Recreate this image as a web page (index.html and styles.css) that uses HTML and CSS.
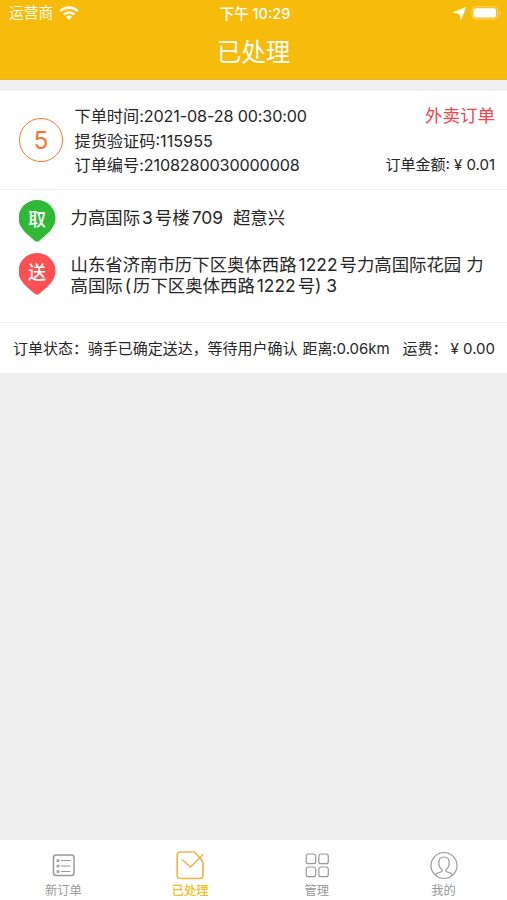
FILE: index.html
```html
<!DOCTYPE html>
<html lang="zh-CN">
<head>
<meta charset="utf-8">
<title>已处理</title>
<link rel="stylesheet" href="styles.css">
</head>
<body>
<div class="app">
  <header class="header">
    <div class="statusbar">
      <div class="carrier"><span>运营商</span>
        <svg width="20" height="14" viewBox="0 0 20 14" fill="none" stroke="#fff" stroke-width="2.6"><path d="M1.3 5.2a12.3 12.3 0 0 1 17.4 0"/><path d="M4.7 8.7a7.5 7.5 0 0 1 10.6 0"/><path d="M10 14l-3.2-3.2a4.5 4.5 0 0 1 6.4 0z" fill="#fff" stroke="none"/></svg>
      </div>
      <div class="clock">下午 10:29</div>
      <div class="indicators">
        <svg width="13" height="13" viewBox="0 0 12 12" fill="#fff"><path d="M11.8.2L7.4 11.800 6 6.200.2 5z" stroke="#fff" stroke-width=".4"/></svg>
        <svg width="30" height="14" viewBox="0 0 30 14"><rect x="1" y=".7" width="25.5" height="12.3" rx="3.5" fill="none" stroke="#fff" stroke-opacity=".4"/><rect x="2.5" y="2.2" width="22.5" height="9.3" rx="2" fill="#fff"/><path d="M28 5v4q1.5-.6 1.5-2T28 5z" fill="#fff" fill-opacity=".4"/></svg>
      </div>
    </div>
    <h1 class="title">已处理</h1>
  </header>

  <main class="content">
    <article class="card">
      <section class="summary">
        <div class="number">5</div>
        <div class="facts">
          <div class="row"><p class="fact">下单时间<span class="value">:2021-08-28 00:30:00</span></p><p class="type">外卖订单</p></div>
          <div class="row"><p class="fact">提货验证码<span>:115955</span></p></div>
          <div class="row"><p class="fact">订单编号<span class="value">:2108280030000008</span></p><p class="amount">订单金额<span>: ¥ 0.01</span></p></div>
        </div>
      </section>
      <section class="route">
        <div class="stop">
          <div class="pin pickup">取</div>
          <p class="address">力高国际<span class="num">3</span>号楼<span class="num">709</span><span class="gap"></span>超意兴</p>
        </div>
        <div class="stop">
          <div class="pin deliver">送</div>
          <p class="address two">山东省济南市历下区奥体西路<span class="num">1222</span>号力高国际花园<span class="space"></span>力<br>高国际<span class="num">(</span>历下区奥体西路<span class="num">1222</span>号<span>) 3</span></p>
        </div>
      </section>
      <section class="state">
        <p class="status">订单状态：骑手已确定送达，等待用户确认</p>
        <p class="distance">距离:0.06km</p>
        <p class="fee">运费：<span class="price">¥ 0.00</span></p>
      </section>
    </article>
  </main>

  <nav class="tabs">
    <a class="tab"><svg width="30" height="30" viewBox="0 0 30 30" fill="none" stroke="#999" stroke-width="1.2"><rect x="5.5" y="5" width="20.5" height="20.5" rx="2.5" stroke-width="1.5"/><path d="M13 10.5h9.5M13 16h9.5M13 21.5h9.5"/><circle cx="10" cy="10.5" r="1"/><circle cx="10" cy="16" r="1"/><circle cx="10" cy="21.5" r="1"/></svg><span>新订单</span></a>
    <a class="tab active"><svg width="30" height="30" viewBox="0 0 30 30" fill="none" stroke="#f2b34c" stroke-width="1.7"><path d="M19 2H5.5Q2.200 2 2.200 5.500v19.500q0 3.500 3.300 3.500h19q3.500 0 3.500-3.500V13.200q0-1.800-1.300-3.100L21 3.500Q20 2 19 2z"/><path d="M7 9.500l8.500 7.500L28 4.500" stroke-width="1.5"/></svg><span>已处理</span></a>
    <a class="tab"><svg width="30" height="30" viewBox="0 0 30 30" fill="none" stroke="#999" stroke-width="1.2"><rect x="4.2" y="4" width="9.5" height="9.7" rx="2.3"/><rect x="16.8" y="4" width="9.5" height="9.7" rx="2.3"/><rect x="4.2" y="17" width="9.5" height="9.7" rx="2.3"/><rect x="16.8" y="17" width="9.5" height="9.7" rx="2.3"/></svg><span>管理</span></a>
    <a class="tab"><svg width="30" height="30" viewBox="0 0 30 30" fill="none" stroke="#999" stroke-width="1.2"><circle cx="15" cy="15.5" r="13"/><path d="M6.300 25q1.200-2 5.200-3 2.700-.8 1.200-2.700-2.900-2-2.900-6.800C9.800 9 11.800 7 15 7s5.200 2 5.200 5.500q0 4.800-2.900 6.800-1.500 1.900 1.200 2.700 4 1 5.200 3"/></svg><span>我的</span></a>
  </nav>
</div>
</body>
</html>
```

FILE: styles.css
```css
* { box-sizing: border-box; }
body, h1, p { margin: 0; }
body {
  font-family: Inter, "Noto Sans CJK SC", sans-serif;
  color: #262626;
  background: #eee;
}
p { white-space: nowrap; }
.app { height: 900px; display: flex; flex-direction: column; }

.header { height: 80px; background: #f7bb0c; color: #fff; border-bottom: 1px solid #e8b52a; }
.statusbar {
  height: 27px;
  padding: 0 6px 0 9px;
  display: grid;
  grid-template-columns: 1fr auto 1fr;
  align-items: center;
  font-size: 14.5px;
  line-height: 27px;
}
.carrier { display: flex; align-items: center; gap: 6px; font-size: 14.7px; opacity: .95; }
.clock { font-weight: 500; }
.indicators { display: flex; align-items: center; justify-content: flex-end; gap: 5px; }
.carrier svg, .indicators svg { margin-top: -1px; }
.title { font-size: 24.5px; line-height: 50px; font-weight: 400; text-align: center; }

.content { flex: 1; }
.card { background: #fff; border-top: 11px solid #f0f0f2; height: 293px; }
.summary { height: 99px; padding: 12px 12px 0 19px; display: flex; gap: 11.5px; border-bottom: 1px solid #efefef; }
.number {
  width: 44px; height: 44px; margin-top: 15px; flex: none;
  border: 1.5px solid #f87632; border-radius: 50%;
  color: #f87632; font-size: 24.5px; line-height: 43px; text-align: center;
}
.facts { flex: 1; }
.row { display: flex; justify-content: space-between; height: 24.6px; line-height: 26px; }
.fact { font-size: 16.2px; }
.value { letter-spacing: -.15px; }
.type { font-size: 17.5px; color: #f2444c; }
.amount { font-size: 15px; }

.route { height: 133px; padding: 10px 12px 0 18.5px; border-bottom: 1px solid #efefef; }
.stop { display: flex; gap: 15px; height: 53px; }
.pin {
  width: 37px; height: 42px; flex: none;
  color: #fff; font-size: 18px; line-height: 40px; text-align: center; font-weight: 500;
  clip-path: path("M18.5 0C28.7 0 37 8.2 37 18C37 25 32.5 30.5 27.5 35L20.5 41Q18.5 42.5 16.5 41L9.5 35C4.5 30.5 0 25 0 18C0 8.2 8.3 0 18.5 0Z");
}
.pickup { background: #2fb936; }
.deliver { background: #fe5052; }
.address { font-size: 17.4px; line-height: 20.5px; padding-top: 8px; }
.two { padding-top: 2px; }
.num { margin: 0 2px; }
.gap { display: inline-block; width: 8px; }
.space { display: inline-block; width: 5px; }

.state { height: 50px; padding: 0 12px 2px 13px; display: flex; align-items: center; font-size: 15px; }
.status { letter-spacing: -.03px; }
.distance { margin-left: 5px; letter-spacing: -.05px; }
.fee { margin-left: auto; }
.price { margin-left: 3px; }

.tabs { height: 60px; background: #fff; display: grid; grid-template-columns: repeat(4, 1fr); }
.tab { display: flex; flex-direction: column; align-items: center; padding-top: 10px; font-size: 12.3px; line-height: 22px; color: #999; }
.tab svg { flex: none; }
.active { color: #f8bd1c; font-weight: 500; }
```
